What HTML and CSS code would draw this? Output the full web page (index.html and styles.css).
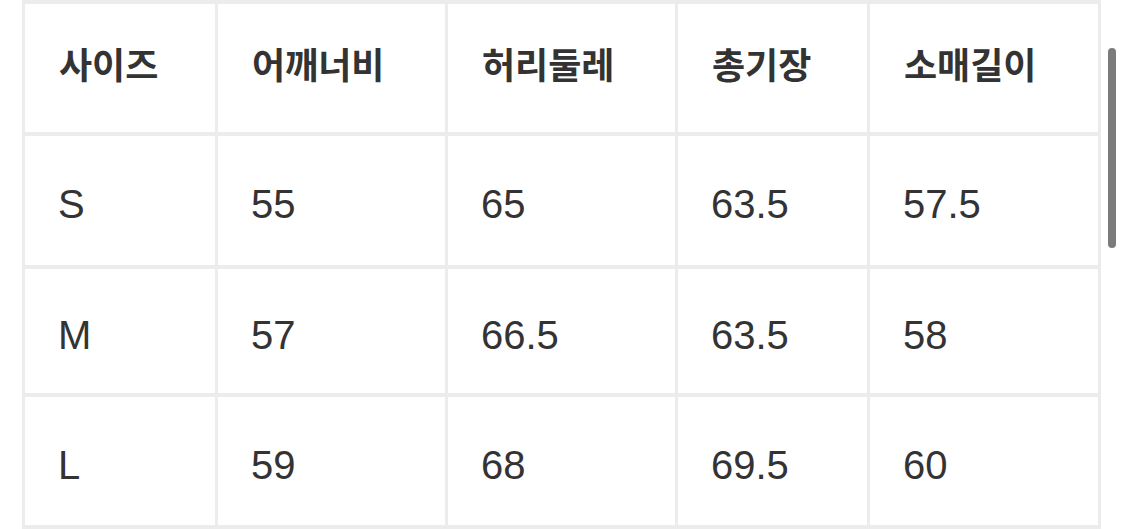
FILE: index.html
```html
<!DOCTYPE html>
<html lang="ko">
<head>
<meta charset="utf-8">
<title>사이즈표</title>
<link rel="stylesheet" href="styles.css">
</head>
<body>
<div class="page">
  <div class="size-table">
    <div class="cell head">사이즈</div>
    <div class="cell head">어깨너비</div>
    <div class="cell head">허리둘레</div>
    <div class="cell head">총기장</div>
    <div class="cell head">소매길이</div>

    <div class="cell num">S</div>
    <div class="cell num">55</div>
    <div class="cell num">65</div>
    <div class="cell num">63.5</div>
    <div class="cell num">57.5</div>

    <div class="cell num">M</div>
    <div class="cell num">57</div>
    <div class="cell num">66.5</div>
    <div class="cell num">63.5</div>
    <div class="cell num">58</div>

    <div class="cell num">L</div>
    <div class="cell num">59</div>
    <div class="cell num">68</div>
    <div class="cell num">69.5</div>
    <div class="cell num">60</div>
  </div>
  <div class="scrollbar"></div>
</div>
</body>
</html>
```

FILE: styles.css
```css
html, body {
  margin: 0;
  padding: 0;
  background: #ffffff;
}

.page {
  position: relative;
  width: 1125px;
  height: 529px;
  overflow: hidden;
}

.size-table {
  display: grid;
  grid-template-columns: 190px 227px 227px 189px 228px;
  grid-template-rows: 128px 129px 124px 128px;
  gap: 4px 3px;
  padding: 4px 3px;
  margin-left: 22px;
  width: fit-content;
  background: #ececec;
}

.cell {
  background: #ffffff;
  display: flex;
  align-items: center;
  padding-left: 35px;
  color: #333333;
}

.head {
  font-family: "Noto Sans CJK KR", "Noto Sans", sans-serif;
  font-weight: 700;
  font-size: 36px;
  padding-left: 34px;
  padding-bottom: 10px;
}

.num {
  font-family: "Liberation Sans", Arial, sans-serif;
  font-weight: 400;
  font-size: 40px;
  padding-left: 33px;
  padding-top: 8px;
}

.scrollbar {
  position: absolute;
  left: 1108px;
  top: 48px;
  width: 8px;
  height: 200px;
  border-radius: 4px;
  background: #7b7b7b;
}
```
